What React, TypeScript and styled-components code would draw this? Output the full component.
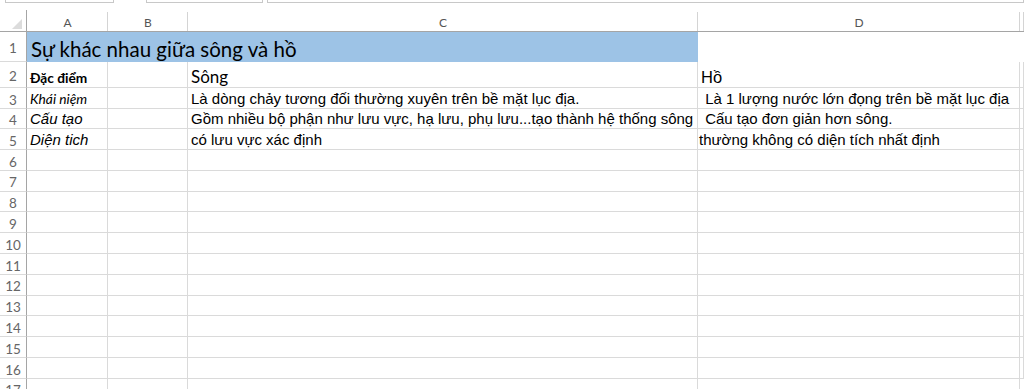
import styled, { createGlobalStyle } from 'styled-components';

const CALIBRI = `Lato, "Open Sans", "Liberation Sans", sans-serif`;
const ARIAL = `"Liberation Sans", Arial, sans-serif`;
const GRID = '#dadada';
const HEAD_LINE = '#a5a5a5';

const GlobalStyle = createGlobalStyle`
  html, body {
    margin: 0;
    padding: 0;
    background: #fff;
  }
  body {
    width: 1024px;
    height: 389px;
    overflow: hidden;
  }
`;

const Page = styled.div`
  display: flex;
  flex-direction: column;
  width: 1024px;
`;

const FormulaStrip = styled.div`
  display: flex;
  height: 3px;
  padding-left: 5px;
  gap: 32px;
  margin-bottom: 7px;
`;

const StripBox = styled.div<{ $w: string }>`
  flex: ${({ $w }) => $w};
  border: 1px solid #c8c8c8;
  border-top: none;
  background: #fff;
  &:last-child {
    margin-left: -28px;
  }
`;

const Sheet = styled.div`
  display: grid;
  grid-template-columns: 27px 81px 80px 510px 322px 1fr;
  grid-template-rows: 22px 30px 26px repeat(3, 20.67px) repeat(12, 20.8px);
`;

const Corner = styled.div`
  position: relative;
  border-right: 1px solid ${HEAD_LINE};
  border-bottom: 1px solid ${HEAD_LINE};
  svg {
    position: absolute;
    right: 4px;
    bottom: 2px;
  }
`;

const ColHead = styled.div`
  position: relative;
  display: flex;
  align-items: center;
  justify-content: center;
  padding-top: 3px;
  border-bottom: 1px solid ${HEAD_LINE};
  font-family: ${CALIBRI};
  font-size: 12px;
  color: #555;
  &::after {
    content: '';
    position: absolute;
    right: 0;
    top: 2px;
    bottom: 0;
    width: 1px;
    background: #d4d4d4;
  }
`;

const RowNum = styled.div`
  display: flex;
  align-items: center;
  justify-content: center;
  padding-top: 5px;
  border-right: 1px solid ${HEAD_LINE};
  border-bottom: 1px solid ${GRID};
  font-family: ${CALIBRI};
  font-size: 13.5px;
  color: #666;
  line-height: 1;
`;

type Variant = 'title' | 'big' | 'bigArial' | 'boldSmall' | 'italicSmall' | 'italic' | 'plain';

const fonts: Record<Variant, string> = {
  title: `font-family: ${CALIBRI}; font-size: 20.5px;`,
  big: `font-family: ${CALIBRI}; font-size: 17px;`,
  bigArial: `font-family: ${ARIAL}; font-size: 16.5px;`,
  boldSmall: `font-family: ${CALIBRI}; font-size: 13.7px; font-weight: 700;`,
  italicSmall: `font-family: ${CALIBRI}; font-size: 13.8px; font-style: italic;`,
  italic: `font-family: ${ARIAL}; font-size: 15px; font-style: italic;`,
  plain: `font-family: ${ARIAL}; font-size: 15px;`,
};

const Cell = styled.div<{ $v?: Variant; $span?: number; $fill?: string; $bare?: boolean; $pad?: number }>`
  display: flex;
  align-items: flex-end;
  min-width: 0;
  padding: 0 0 2px ${({ $pad }) => $pad ?? 3}px;
  grid-column: span ${({ $span }) => $span ?? 1};
  background: ${({ $fill }) => $fill ?? 'transparent'};
  border-right: 1px solid ${({ $fill, $bare }) => ($fill || $bare ? 'transparent' : GRID)};
  border-bottom: 1px solid ${({ $fill, $bare }) => ($fill || $bare ? 'transparent' : GRID)};
  white-space: pre;
  color: #000;
  line-height: 1;
  ${({ $v }) => fonts[$v ?? 'plain']}
`;

const Blank = styled.div`
  border-right: 1px solid ${GRID};
  border-bottom: 1px solid ${GRID};
  &:last-child {
    border-right: none;
  }
`;

const CornerTriangle = () => (
  <svg width="10" height="10" viewBox="0 0 10 10">
    <polygon points="10,0 10,10 0,10" fill="#dcdcdc" />
  </svg>
);

const emptyRows = Array.from({ length: 12 }, (_, i) => i + 6);

export default function App() {
  return (
    <>
      <GlobalStyle />
      <Page>
        <FormulaStrip>
          <StripBox $w="0 0 107px" />
          <StripBox $w="0 0 115px" />
          <StripBox $w="1 1 auto" />
        </FormulaStrip>
        <Sheet>
          <Corner>
            <CornerTriangle />
          </Corner>
          <ColHead>A</ColHead>
          <ColHead>B</ColHead>
          <ColHead>C</ColHead>
          <ColHead>D</ColHead>
          <ColHead />

          <RowNum>1</RowNum>
          <Cell $v="title" $span={3} $fill="#9dc3e6" $pad={4}>Sự khác nhau giữa sông và hồ</Cell>
          <Cell $bare />
          <Cell $bare />

          <RowNum>2</RowNum>
          <Cell $v="boldSmall">Đặc điểm</Cell>
          <Cell />
          <Cell $v="big">Sông</Cell>
          <Cell $v="bigArial">Hồ</Cell>
          <Cell />

          <RowNum>3</RowNum>
          <Cell $v="italicSmall">Khái niệm</Cell>
          <Cell />
          <Cell>Là dòng chảy tương đối thường xuyên trên bề mặt lục địa.</Cell>
          <Cell>{' Là 1 lượng nước lớn đọng trên bề mặt lục địa'}</Cell>
          <Cell />

          <RowNum>4</RowNum>
          <Cell $v="italic">Cấu tạo</Cell>
          <Cell />
          <Cell>Gồm nhiều bộ phận như lưu vực, hạ lưu, phụ lưu...tạo thành hệ thống sông</Cell>
          <Cell>{' Cấu tạo đơn giản hơn sông.'}</Cell>
          <Cell />

          <RowNum>5</RowNum>
          <Cell $v="italic">Diện tich</Cell>
          <Cell />
          <Cell>có lưu vực xác định</Cell>
          <Cell $pad={1}>thường không có diện tích nhất định</Cell>
          <Cell />

          {emptyRows.map((n) => (
            <>
              <RowNum key={`n${n}`}>{n}</RowNum>
              <Blank key={`a${n}`} />
              <Blank key={`b${n}`} />
              <Blank key={`c${n}`} />
              <Blank key={`d${n}`} />
              <Blank key={`e${n}`} />
            </>
          ))}
        </Sheet>
      </Page>
    </>
  );
}
